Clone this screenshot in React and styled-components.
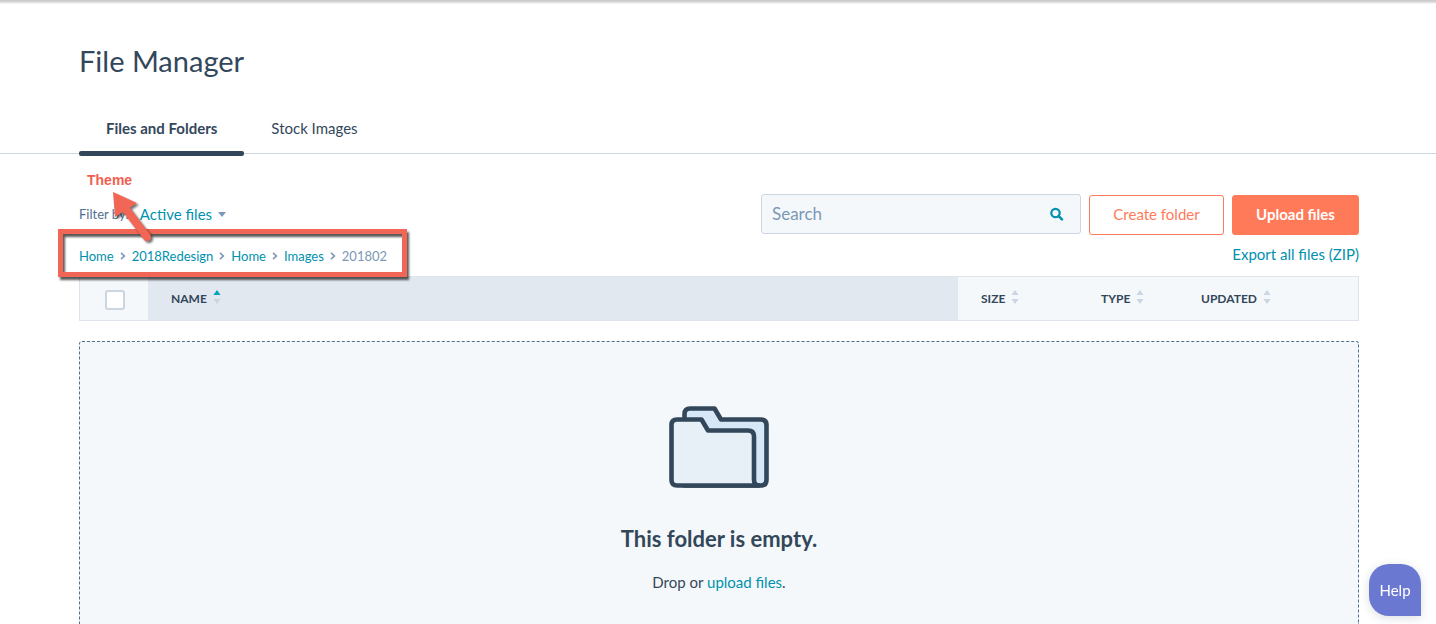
import React from 'react';
import styled, { createGlobalStyle } from 'styled-components';

const GlobalStyle = createGlobalStyle`
  *, *::before, *::after { box-sizing: border-box; }
  body {
    margin: 0;
    background: #fff;
    color: #33475b;
    font-family: Lato, "Liberation Sans", sans-serif;
    font-size: 15px;
    line-height: 20px;
  }
  button, input { font: inherit; }
`;

const Page = styled.div`
  display: flex;
  flex-direction: column;
  height: 100vh;
  overflow: hidden;
`;

const TopShade = styled.div`
  height: 4px;
  background: linear-gradient(#c8c8c8, #d8d8d8 50%, #fff);
`;

const Header = styled.header`
  padding: 38px 77px 0 79px;
  border-bottom: 1px solid #cbd6e2;
`;

const Title = styled.h1`
  margin: 0;
  font-size: 29px;
  line-height: 38px;
  font-weight: 400;
`;

const Tabs = styled.nav`
  display: flex;
  margin-top: 22px;
`;

const Tab = styled.a`
  display: flex;
  align-items: center;
  justify-content: center;
  position: relative;
  height: 51px;
  padding: 0 27px;
  color: #33475b;
  font-weight: ${p => (p.$active ? 700 : 400)};
  text-decoration: none;
  &::after {
    content: "";
    display: ${p => (p.$active ? 'block' : 'none')};
    position: absolute;
    left: 0;
    right: 0;
    bottom: -3px;
    height: 5px;
    border-radius: 2px;
    background: #33475b;
  }
`;

const Main = styled.main`
  display: flex;
  flex: 1;
  flex-direction: column;
  padding: 40px 77px 0 79px;
`;

const Toolbar = styled.div`
  display: flex;
  position: relative;
  justify-content: space-between;
`;

const Filters = styled.div`
  display: flex;
  flex-direction: column;
`;

const FilterRow = styled.div`
  display: flex;
  align-items: center;
  gap: 11px;
  height: 40px;
`;

const FilterLabel = styled.span`
  color: #516f90;
  font-size: 13px;
`;

const FilterButton = styled.button`
  display: flex;
  align-items: center;
  gap: 6px;
  padding: 0;
  border: 0;
  background: none;
  color: #0091ae;
`;

const Breadcrumbs = styled.nav`
  display: flex;
  align-items: center;
  gap: 6px;
  height: 42px;
  padding-top: 2px;
  font-size: 13px;
  color: #7c98b6;
`;

const TextLink = styled.a`
  color: #0091ae;
  text-decoration: none;
`;

const Actions = styled.div`
  display: flex;
  flex-direction: column;
  align-items: flex-end;
  gap: 9px;
`;

const ActionRow = styled.div`
  display: flex;
  align-items: flex-end;
  gap: 8px;
  height: 41px;
`;

const SearchBox = styled.label`
  display: flex;
  align-self: flex-start;
  align-items: center;
  width: 320px;
  height: 40px;
  padding: 0 16px 0 10px;
  border: 1px solid #cbd6e2;
  border-radius: 3px;
  background: #f5f8fa;
`;

const SearchInput = styled.input`
  flex: 1;
  min-width: 0;
  padding: 0;
  border: 0;
  outline: 0;
  background: none;
  color: #33475b;
  font-size: 17px;
  &::placeholder { color: #7c98b6; opacity: 1; }
`;

const Button = styled.button`
  width: ${p => (p.$primary ? 127 : 135)}px;
  height: 40px;
  padding: 0 0 2px;
  border: 1px solid #ff7a59;
  border-radius: 3px;
  background: ${p => (p.$primary ? '#ff7a59' : '#fff')};
  color: ${p => (p.$primary ? '#fff' : '#ff7a59')};
  font-weight: ${p => (p.$primary ? 700 : 400)};
`;

const Table = styled.table`
  width: 100%;
  table-layout: fixed;
  border-collapse: separate;
  border-spacing: 0;
  border: 1px solid #dfe3eb;
`;

const HeadCell = styled.th`
  width: ${p => p.$width || 'auto'};
  height: 43px;
  padding: 0 0 0 ${p => (p.$check ? 25 : 23)}px;
  background: ${p => (p.$sorted ? '#e1e8f0' : '#f5f8fa')};
  text-align: left;
`;

const SortButton = styled.button`
  display: flex;
  align-items: center;
  gap: 6px;
  padding: 0;
  border: 0;
  background: none;
  color: #33475b;
  font-size: 12px;
  font-weight: 700;
`;

const SortArrows = styled.svg`
  margin-bottom: 4px;
`;

const Checkbox = styled.input`
  display: block;
  appearance: none;
  width: 20px;
  height: 20px;
  margin: 2px 0 0;
  border: 2px solid #cbd6e2;
  border-radius: 3px;
  background: #fff;
`;

const DropZone = styled.section`
  display: flex;
  flex: 1;
  flex-direction: column;
  align-items: center;
  margin-top: 20px;
  padding-top: 64px;
  border: 1px dashed #516f90;
  border-bottom: 0;
  border-radius: 3px 3px 0 0;
  background: #f5f8fa;
`;

const EmptyTitle = styled.h2`
  margin: 36px 0 0;
  font-size: 22px;
  line-height: 30px;
  font-weight: 700;
`;

const EmptyText = styled.p`
  margin: 18px 0 0;
`;

const HelpButton = styled.button`
  position: fixed;
  right: 15px;
  bottom: 8px;
  width: 52px;
  height: 52px;
  padding: 0;
  border: 0;
  border-radius: 20px 20px 0 20px;
  background: #6a78d1;
  color: #fff;
  box-shadow: 0 2px 10px rgba(51, 71, 91, 0.18);
`;

const CalloutBox = styled.div`
  position: absolute;
  left: -21px;
  top: 35px;
  width: 349px;
  height: 48px;
  border: 5px solid #f26655;
  filter: drop-shadow(2px 3px 1px rgba(0, 0, 0, 0.65));
  pointer-events: none;
`;

const CalloutArrow = styled.svg`
  position: absolute;
  left: 28px;
  top: -6px;
  overflow: visible;
  filter: drop-shadow(2px 2px 1px rgba(0, 0, 0, 0.55));
  pointer-events: none;
`;

const CalloutText = styled.strong`
  position: absolute;
  left: 8px;
  top: -24px;
  color: #f2604f;
  font-family: "Liberation Sans", Arial, sans-serif;
  font-size: 14px;
`;

const Chevron = () => (
  <svg width="6" height="8" viewBox="0 0 6 8" fill="none" stroke="#7c98b6" strokeWidth="1.6" aria-hidden="true">
    <path d="M1 .8 4.4 4 1 7.2" />
  </svg>
);

const SortIcon = ({ ascending }) => (
  <SortArrows width="8" height="14" viewBox="0 0 8 14" fill="#cbd6e2" aria-hidden="true">
    <path d="M.4 5 4 0l3.600 5z" fill={ascending ? '#00a4bd' : undefined} />
    <path d="M.4 9h7.200L4 14z" />
  </SortArrows>
);

const FolderIcon = () => (
  <svg width="100" height="82" viewBox="0 0 100 82" stroke="#33475b" strokeWidth="4.600" strokeLinejoin="round" aria-hidden="true">
    <path d="M15.500 13V8q0-5.500 5.500-5.500h24.500L52 13.500h40q5.500 0 5.500 5.500v55q0 5.500-5.500 5.500H15.500z" fill="#d6e7f8" />
    <path d="M8 13.500h24.500L39 24.500h40q6 0 6 6V74q0 5.500 5.500 5.500H8q-5.500 0-5.500-5.500V19q0-5.500 5.500-5.500z" fill="#e7eff7" stroke="none" />
    <path d="M91 79.500H8q-5.500 0-5.500-5.500V19q0-5.500 5.500-5.500h24.500L39 24.500h40q6 0 6 6V74q0 5.500 5.500 5.500" fill="none" />
  </svg>
);

const columns = [
  { label: 'NAME', sorted: true },
  { label: 'SIZE', width: '120px' },
  { label: 'TYPE', width: '100px' },
  { label: 'UPDATED', width: '180px' },
];

const path = ['Home', '2018Redesign', 'Home', 'Images'];

export default function App() {
  return (
    <Page>
      <GlobalStyle />
      <TopShade />
      <Header>
        <Title>File Manager</Title>
        <Tabs>
          <Tab href="#files" $active>Files and Folders</Tab>
          <Tab href="#stock">Stock Images</Tab>
        </Tabs>
      </Header>
      <Main>
        <Toolbar>
          <Filters>
            <FilterRow>
              <FilterLabel>Filter by:</FilterLabel>
              <FilterButton type="button">
                Active files
                <svg width="8" height="5" viewBox="0 0 8 5" fill="#7c98b6" aria-hidden="true"><path d="M0 0h8L4 5z" /></svg>
              </FilterButton>
            </FilterRow>
            <Breadcrumbs aria-label="Breadcrumb">
              {path.map((name, i) => (
                <React.Fragment key={i}>
                  <TextLink href="#folder">{name}</TextLink>
                  <Chevron />
                </React.Fragment>
              ))}
              <span>201802</span>
            </Breadcrumbs>
          </Filters>
          <Actions>
            <ActionRow>
              <SearchBox>
                <SearchInput type="search" placeholder="Search" aria-label="Search" />
                <svg width="14" height="14" viewBox="0 0 14 14" fill="none" stroke="#0091ae" strokeWidth="2.200" aria-hidden="true">
                  <circle cx="5.500" cy="6" r="4.200" />
                  <path d="m8.700 9.200 3.200 3.200" strokeWidth="2.600" strokeLinecap="round" />
                </svg>
              </SearchBox>
              <Button type="button">Create folder</Button>
              <Button type="button" $primary>Upload files</Button>
            </ActionRow>
            <TextLink href="#export">Export all files (ZIP)</TextLink>
          </Actions>
          <CalloutBox />
          <CalloutArrow width="46" height="56" viewBox="0 0 46 56" aria-hidden="true">
            <path d="M19.500 22 40 49" stroke="#f26655" strokeWidth="8" strokeLinecap="round" />
            <path d="M6 4l24 11L8 29z" fill="#f26655" />
          </CalloutArrow>
          <CalloutText>Theme</CalloutText>
        </Toolbar>
        <Table>
          <thead>
            <tr>
              <HeadCell $width="68px" $check><Checkbox type="checkbox" aria-label="Select all files" /></HeadCell>
              {columns.map(c => (
                <HeadCell key={c.label} $width={c.width} $sorted={c.sorted}>
                  <SortButton type="button">{c.label}<SortIcon ascending={c.sorted} /></SortButton>
                </HeadCell>
              ))}
            </tr>
          </thead>
        </Table>
        <DropZone>
          <FolderIcon />
          <EmptyTitle>This folder is empty.</EmptyTitle>
          <EmptyText>Drop or <TextLink href="#upload">upload files</TextLink>.</EmptyText>
        </DropZone>
      </Main>
      <HelpButton type="button">Help</HelpButton>
    </Page>
  );
}
